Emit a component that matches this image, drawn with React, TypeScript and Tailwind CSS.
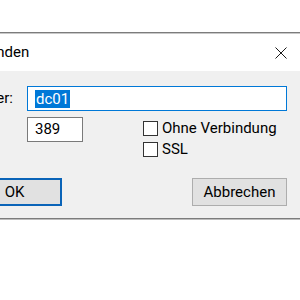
const FONT = "font-['Roboto',sans-serif]";

function CloseIcon(): React.ReactElement {
  return (
    <svg width="12" height="12" viewBox="0 0 12 12" className="text-[#1a1a1a]">
      <path d="M0.5 0.5 L11.5 11.5 M11.5 0.5 L0.5 11.5" stroke="currentColor" strokeWidth="1" />
    </svg>
  );
}

function Check({ label }: { label: string }): React.ReactElement {
  return (
    <label className="flex h-[21px] items-center gap-[4px]">
      <span className="h-[15px] w-[15px] border border-[#333] bg-white" />
      <span className="leading-none">{label}</span>
    </label>
  );
}

export default function App(): React.ReactElement {
  return (
    <div className={`h-[300px] w-[300px] overflow-hidden bg-white text-[15px] text-black ${FONT}`}>
      <div className="h-[32px]" />
      <div className="-ml-[45px] w-[360px]">
        {/* frame top */}
        <div className="h-px bg-[#7c7c7c]" />
        <div className="h-px bg-[#c8c8c8]" />

        {/* title bar */}
        <div className="flex h-[37px] items-center justify-between bg-white pl-[7px] pr-[28px]">
          <span className="pb-[1px]">Verbinden</span>
          <CloseIcon />
        </div>

        {/* body */}
        <div className="bg-[#f0f0f0] pl-[12px] pt-[15px]">
          <div className="flex h-[25px] items-center">
            <span className="w-[60px]">Server:</span>
            <div className="flex h-[25px] w-[260px] items-center border border-[#0078d7] bg-white pl-[7px]">
              <span className="bg-[#0078d7] px-[1px] leading-[18px] text-white">dc01</span>
            </div>
          </div>

          <div className="mt-[6px] flex">
            <span className="mt-[3px] w-[60px]">Port:</span>
            <div className="flex h-[25px] w-[56px] items-center border border-[#7a7a7a] bg-white pl-[7px]">
              389
            </div>
            <div className="ml-[60px] mt-[1px] flex flex-col">
              <Check label="Ohne Verbindung" />
              <Check label="SSL" />
            </div>
          </div>

          <div className="mt-[18px] flex pb-[12px]">
            <button className="flex h-[28px] w-[95px] items-center justify-center border-2 border-[#0a64b8] bg-[#e1e1e1]">
              OK
            </button>
            <button className="ml-[130px] flex h-[28px] w-[95px] items-center justify-center border border-[#adadad] bg-[#e1e1e1]">
              Abbrechen
            </button>
          </div>
        </div>

        {/* frame bottom */}
        <div className="h-px bg-[#7c7c7c]" />
        <div className="h-px bg-[#bdbdbd]" />
      </div>
    </div>
  );
}
